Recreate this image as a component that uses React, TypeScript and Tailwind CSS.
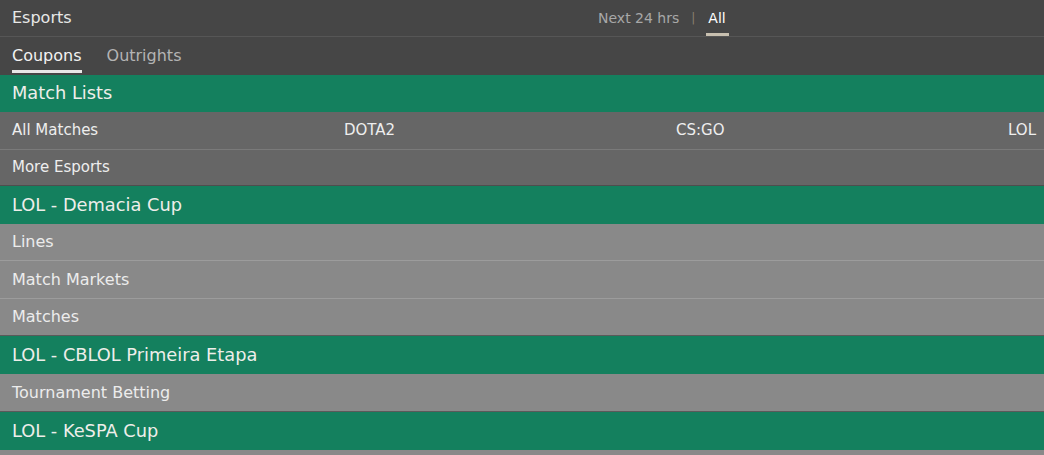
import React from "react";

const font = { fontFamily: '"DejaVu Sans", Verdana, sans-serif' };

function GreenRow({ label, h }: { label: string; h: string }) {
  return (
    <div className={h + " bg-[#14805e] flex items-center px-3 text-[17.8px] text-[#eeeeea]"}>
      {label}
    </div>
  );
}

function LightRow({ label, h, last }: { label: string; h: string; last?: boolean }) {
  return (
    <div
      className={
        h +
        " bg-[#898989] flex items-center px-3 text-[16px] text-[#ececec] border-b " +
        (last ? "border-[#5a5a5a]" : "border-[#9c9c9c]")
      }
    >
      {label}
    </div>
  );
}

export default function App() {
  return (
    <div className="w-[1044px] h-[455px] overflow-hidden bg-[#464646]" style={font}>
      <div className="h-[37px] flex items-center border-b border-[#565656] relative">
        <div className="px-3 text-[16px] text-[#e8e8e8]">Esports</div>
        <div className="absolute left-[598px] top-0 h-[36px] flex items-center text-[14px]">
          <span className="text-[#a8a8a8]">Next 24 hrs</span>
          <span className="text-[#8a8070] ml-[12px] mr-[13px] text-[12px]">|</span>
          <span className="relative text-white h-[36px] flex items-center">
            <span>All</span>
            <span className="absolute left-[-2px] right-[-3px] bottom-0 h-[3px] bg-[#c8c0b0]" />
          </span>
        </div>
      </div>
      <div className="h-[38px] flex items-center px-3 gap-[25px] text-[16px]">
        <span className="relative text-[#f2f2f2] h-[38px] flex items-center">
          Coupons
          <span className="absolute left-0 right-0 bottom-[2px] h-[3px] bg-[#e8e8e8]" />
        </span>
        <span className="text-[#b4b4b4]">Outrights</span>
      </div>
      <GreenRow label="Match Lists" h="h-[37px]" />
      <div className="h-[38px] bg-[#666666] grid grid-cols-[332px_332px_1fr_auto] items-center pl-3 pr-2 text-[15px] text-[#eeeeee] border-b border-[#7a7a7a]">
        <span>All Matches</span>
        <span>DOTA2</span>
        <span>CS:GO</span>
        <span>LOL</span>
      </div>
      <div className="h-[36px] bg-[#666666] flex items-center px-3 text-[15px] text-[#eeeeee] border-b border-[#4e4e4e]">
        More Esports
      </div>
      <GreenRow label="LOL - Demacia Cup" h="h-[38px]" />
      <LightRow label="Lines" h="h-[37px]" />
      <LightRow label="Match Markets" h="h-[38px]" />
      <LightRow label="Matches" h="h-[37px]" last />
      <GreenRow label="LOL - CBLOL Primeira Etapa" h="h-[38px]" />
      <LightRow label="Tournament Betting" h="h-[38px]" last />
      <GreenRow label="LOL - KeSPA Cup" h="h-[38px]" />
      <LightRow label="" h="h-[38px]" />
    </div>
  );
}
